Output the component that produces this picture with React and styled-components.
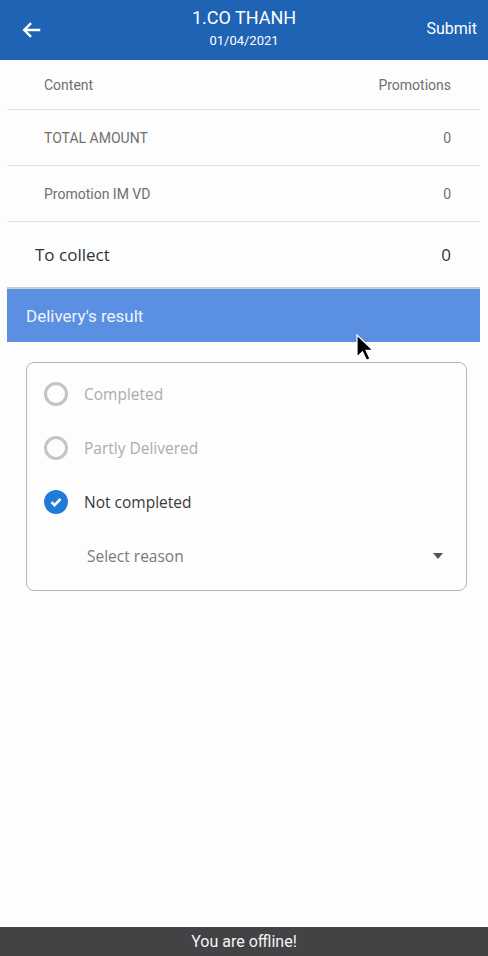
import styled, { createGlobalStyle } from "styled-components";

const Global = createGlobalStyle`
  html, body {
    margin: 0;
    padding: 0;
    background: #fdfdfd;
  }
  body {
    font-family: Roboto, "Liberation Sans", sans-serif;
  }
`;

const Page = styled.div`
  position: relative;
  width: 488px;
  height: 956px;
  display: flex;
  flex-direction: column;
  background: #fdfdfd;
  overflow: hidden;
`;

const Header = styled.header`
  height: 60px;
  background: #1e63b4;
  display: grid;
  grid-template-columns: 80px 1fr 80px;
  align-items: center;
  color: #ffffff;
`;

const BackButton = styled.button`
  border: none;
  background: none;
  padding: 0 0 0 21px;
  display: flex;
  align-items: center;
  color: #ffffff;
  height: 100%;
`;

const TitleBlock = styled.div`
  display: flex;
  flex-direction: column;
  align-items: center;
  margin-top: -3px;
`;

const Title = styled.h1`
  margin: 0;
  font-size: 18px;
  font-weight: 400;
  line-height: 22px;
`;

const Subtitle = styled.span`
  font-size: 13px;
  line-height: 20px;
  margin-top: 2px;
`;

const Submit = styled.button`
  border: none;
  background: none;
  color: #ffffff;
  font-family: Roboto, "Liberation Sans", sans-serif;
  font-size: 16px;
  text-align: right;
  padding: 0 11px 0 0;
  margin-top: -4px;
`;

const Body = styled.main`
  flex: 1;
  margin: 0 8px 0 7px;
`;

const Row = styled.div`
  display: flex;
  justify-content: space-between;
  align-items: center;
  height: ${(p) => p.$h || 55}px;
  padding: 0 29px 0 ${(p) => (p.$big ? 28 : 37)}px;
  border-bottom: 1px solid ${(p) => p.$line || "#e2e2e4"};
  box-sizing: border-box;
  font-size: ${(p) => (p.$big ? 17 : 14)}px;
  color: ${(p) => (p.$big ? "#333" : "#707070")};
  font-family: ${(p) =>
    p.$big ? `"Open Sans", "Liberation Sans", sans-serif` : `Roboto, "Liberation Sans", sans-serif`};
`;

const Section = styled.div`
  height: 55px;
  background: #5b8fe2;
  border-top: 2px solid #c8cbd2;
  display: flex;
  align-items: center;
  padding-left: 19px;
  color: #eef3fd;
  font-size: 17px;
  box-sizing: border-box;
`;

const Card = styled.div`
  margin: 20px 13px 0 19px;
  border: 1px solid #b5b5b8;
  border-radius: 8px;
  padding: 4px 0 7px;
`;

const Option = styled.label`
  display: flex;
  align-items: center;
  gap: 16px;
  height: 54px;
  padding-left: 17px;
  font-family: "Open Sans", "Liberation Sans", sans-serif;
  font-size: 15.5px;
  color: ${(p) => (p.$active ? "#3a3a3a" : "#acacac")};
`;

const Ring = styled.span`
  width: 18px;
  height: 18px;
  border-radius: 50%;
  border: 3px solid #c4c4c4;
`;

const Checked = styled.span`
  width: 24px;
  height: 24px;
  border-radius: 50%;
  background: #1f7ad8;
  display: flex;
  align-items: center;
  justify-content: center;
`;

const Select = styled.div`
  display: flex;
  justify-content: space-between;
  align-items: center;
  height: 54px;
  padding: 0 23px 0 60px;
  font-family: "Open Sans", "Liberation Sans", sans-serif;
  font-size: 15.5px;
  color: #7a7a7a;
`;

const Caret = styled.span`
  width: 0;
  height: 0;
  border-left: 5px solid transparent;
  border-right: 5px solid transparent;
  border-top: 6px solid #555;
`;

const Offline = styled.footer`
  height: 29px;
  background: #434244;
  color: #f4f4f4;
  display: flex;
  align-items: center;
  justify-content: center;
  font-size: 16px;
`;

const Pointer = styled.svg`
  position: absolute;
  left: 355px;
  top: 334px;
`;

const options = [
  { label: "Completed", active: false },
  { label: "Partly Delivered", active: false },
  { label: "Not completed", active: true },
];

const App = () => {
  return (
    <Page>
      <Global />
      <Header>
        <BackButton aria-label="back">
          <svg width="22" height="22" viewBox="0 0 24 24" fill="none" stroke="#fff" strokeWidth="2.6">
            <path d="M21 12H4M11 4.5 3.5 12l7.5 7.5" />
          </svg>
        </BackButton>
        <TitleBlock>
          <Title>1.CO THANH</Title>
          <Subtitle>01/04/2021</Subtitle>
        </TitleBlock>
        <Submit>Submit</Submit>
      </Header>
      <Body>
        <Row $h={50}>
          <span>Content</span>
          <span>Promotions</span>
        </Row>
        <Row $h={56}>
          <span>TOTAL AMOUNT</span>
          <span>0</span>
        </Row>
        <Row $h={56}>
          <span>Promotion IM VD</span>
          <span>0</span>
        </Row>
        <Row $h={65} $big $line="transparent">
          <span>To collect</span>
          <span>0</span>
        </Row>
        <Section>Delivery's result</Section>
        <Card>
          {options.map((o) => (
            <Option key={o.label} $active={o.active}>
              {o.active ? (
                <Checked>
                  <svg width="14" height="14" viewBox="0 0 14 14" fill="none" stroke="#fff" strokeWidth="2.6">
                    <path d="M2.5 7.2l3 3 6-6.2" />
                  </svg>
                </Checked>
              ) : (
                <Ring />
              )}
              {o.label}
            </Option>
          ))}
          <Select>
            <span>Select reason</span>
            <Caret />
          </Select>
        </Card>
      </Body>
      <Offline>You are offline!</Offline>
      <Pointer width="20" height="28" viewBox="0 0 20 28">
        <path d="M2 1v22l5.5-5.2 4 8.5 3.5-1.6-4-8.3H18Z" fill="#000" stroke="#fff" strokeWidth="1.2" />
      </Pointer>
    </Page>
  );
};

export default App;
